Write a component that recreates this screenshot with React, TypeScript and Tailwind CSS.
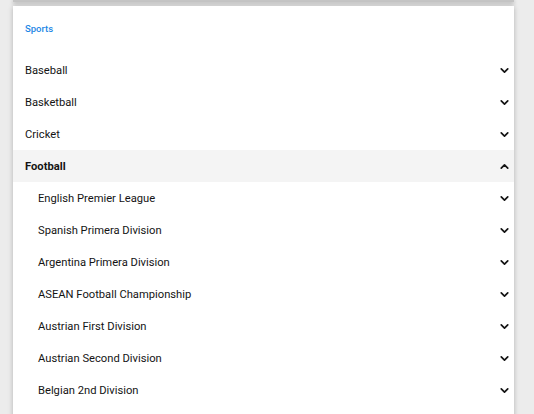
import { ChevronDown, ChevronUp } from 'lucide-react';

const SPORTS = ['Baseball', 'Basketball', 'Cricket'];
const LEAGUES = [
  'English Premier League',
  'Spanish Primera Division',
  'Argentina Primera Division',
  'ASEAN Football Championship',
  'Austrian First Division',
  'Austrian Second Division',
  'Belgian 2nd Division',
];

function Row({ label, sub, open, bold }: { label: string; sub?: boolean; open?: boolean; bold?: boolean }) {
  return (
    <div
      className={
        'flex items-center justify-between h-[32px] pr-[3px] ' +
        (sub ? 'pl-[25px] ' : 'pl-[12px] ') +
        (open ? 'bg-[#f4f4f4]' : '')
      }
    >
      <span className={'text-[11.2px] leading-[14px] pt-[2px] text-[#141414] ' + (bold ? 'font-bold' : '')}>{label}</span>
      {open ? (
        <ChevronUp size={13} strokeWidth={3.2} className="text-[#141414]" />
      ) : (
        <ChevronDown size={13} strokeWidth={3.2} className="text-[#141414]" />
      )}
    </div>
  );
}

export default function App() {
  return (
    <div className="w-[534px] h-[414px] overflow-hidden bg-[#ececec]" style={{ fontFamily: 'Roboto, "Liberation Sans", sans-serif' }}>
      <div className="ml-[13px] w-[501px] h-[2px] bg-[#c4c4c4] shadow-[0_1px_4px_rgba(0,0,0,0.4)]" />
      <div className="ml-[13px] w-[501px] mt-[4px] bg-white shadow-[0_1px_5px_rgba(0,0,0,0.25)]">
        <div className="pl-[12px] pt-[17px] pb-[19px]">
          <span className="block text-[9.5px] leading-[12px] font-medium text-[#1e88e5]">Sports</span>
        </div>
        {SPORTS.map((s) => (
          <Row key={s} label={s} />
        ))}
        <Row label="Football" open bold />
        {LEAGUES.map((l) => (
          <Row key={l} label={l} sub />
        ))}
        <div className="h-[20px]" />
      </div>
    </div>
  );
}
